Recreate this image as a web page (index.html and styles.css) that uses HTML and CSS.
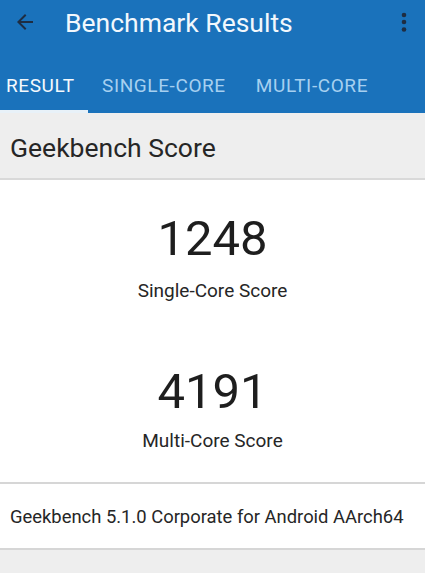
FILE: index.html
```html
<!DOCTYPE html>
<html>
<head>
<meta charset="utf-8">
<link rel="stylesheet" href="styles.css">
</head>
<body>
<div class="app">
  <header class="appbar">
    <div class="toolbar">
      <svg class="back" width="24" height="24" viewBox="0 0 24 24"><path d="M20 11H7.83l5.59-5.59L12 4l-8 8 8 8 1.41-1.41L7.83 13H20v-2z" fill="#1e2d42"/></svg>
      <div class="title">Benchmark Results</div>
      <svg class="more" width="8" height="24" viewBox="0 0 8 24"><circle cx="4" cy="5" r="2.3" fill="#1e2d42"/><circle cx="4" cy="12" r="2.3" fill="#1e2d42"/><circle cx="4" cy="19.5" r="2.3" fill="#1e2d42"/></svg>
    </div>
    <nav class="tabs">
      <div class="tab active">RESULT</div>
      <div class="tab t2">SINGLE-CORE</div>
      <div class="tab t3">MULTI-CORE</div>
    </nav>
  </header>
  <div class="section-head">Geekbench Score</div>
  <div class="scores">
    <div class="score s1">
      <div class="num">1248</div>
      <div class="label">Single-Core Score</div>
    </div>
    <div class="score s2">
      <div class="num">4191</div>
      <div class="label">Multi-Core Score</div>
    </div>
  </div>
  <div class="footer-row">Geekbench 5.1.0 Corporate for Android AArch64</div>
</div>
</body>
</html>
```
FILE: styles.css
```css
html, body {
  margin: 0;
  padding: 0;
}
body {
  background: #eeeeee;
  font-family: Roboto, "Noto Sans", sans-serif;
  width: 425px;
  height: 573px;
  overflow: hidden;
}
.appbar {
  background: #1a72bb;
}
.toolbar {
  height: 44px;
  display: flex;
  align-items: center;
}
.back {
  margin-left: 13px;
}
.title {
  margin-left: 28px;
  color: #f2f8fd;
  font-size: 26.5px;
  flex: 1;
}
.more {
  margin-right: 17px;
}
.tabs {
  display: flex;
  height: 69px;
}
.tab {
  color: #a6d0f0;
  font-size: 19px;
  letter-spacing: 0.6px;
  line-height: 24px;
  padding-top: 30px;
  box-sizing: border-box;
  height: 69px;
  white-space: nowrap;
}
.tab.active {
  color: #f4f9fd;
  width: 88px;
  padding-left: 6px;
  border-bottom: 3px solid #e8f1f8;
}
.t2 {
  margin-left: 14px;
}
.t3 {
  margin-left: 30px;
}
.section-head {
  height: 65px;
  line-height: 69px;
  padding-left: 10px;
  font-size: 26.5px;
  color: #262626;
  background: #eeeeee;
  border-bottom: 2px solid #d9d9d9;
}
.scores {
  background: #ffffff;
  height: 304px;
  display: flex;
  flex-direction: column;
  align-items: center;
  border-bottom: 2px solid #d6d6d6;
  box-sizing: border-box;
}
.score {
  display: flex;
  flex-direction: column;
  align-items: center;
}
.num {
  font-size: 49px;
  color: #1e1e1e;
  line-height: 60px;
}
.label {
  font-size: 19px;
  color: #262626;
  line-height: 24px;
}
.s1 {
  margin-top: 29px;
}
.s1 .label {
  margin-top: 10px;
}
.s2 {
  margin-top: 59px;
}
.s2 .label {
  margin-top: 7px;
}
.footer-row {
  background: #ffffff;
  height: 64px;
  line-height: 66px;
  padding-left: 10px;
  font-size: 18.4px;
  color: #262626;
  border-bottom: 2px solid #d6d6d6;
}
```
